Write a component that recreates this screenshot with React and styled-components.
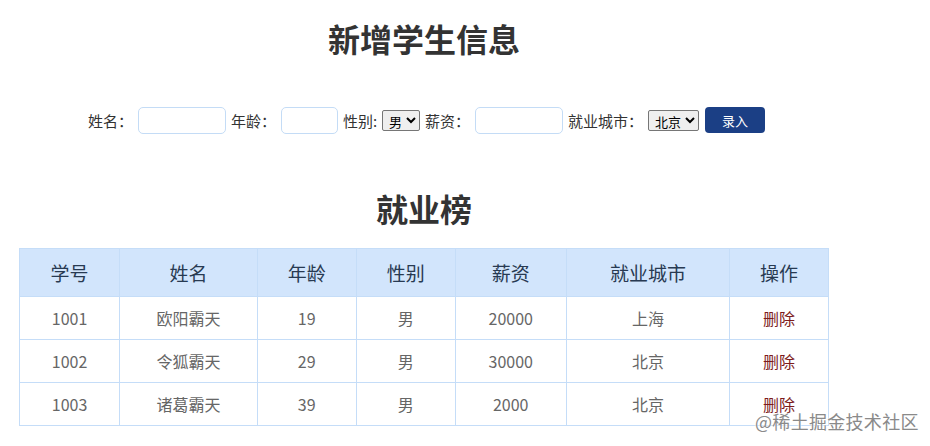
import React, { useState } from 'react'
import styled, { createGlobalStyle } from 'styled-components'

const GlobalStyle = createGlobalStyle`
  body {
    margin: 0;
    font-family: "Microsoft YaHei", "Noto Sans CJK SC", "Noto Sans", sans-serif;
    color: #333;
    background: #fff;
  }
`

const initial = [
  { id: '1001', name: '欧阳霸天', age: 19, sex: '男', salary: 20000, city: '上海' },
  { id: '1002', name: '令狐霸天', age: 29, sex: '男', salary: 30000, city: '北京' },
  { id: '1003', name: '诸葛霸天', age: 39, sex: '男', salary: 2000, city: '北京' },
]

function App() {
  const [list, setList] = useState(initial)

  const remove = (id) => {
    setList(list.filter((item) => item.id !== id))
  }

  return (
    <Page>
      <GlobalStyle />
      <Content>
        <Title>新增学生信息</Title>

        <Form>
          <Label>姓名：</Label>
          <Input width="88px" />
          <Label>年龄：</Label>
          <Input width="57px" />
          <Label>性别:</Label>
          <Select>
            <option>男</option>
            <option>女</option>
          </Select>
          <Label>薪资：</Label>
          <Input width="88px" />
          <Label>就业城市：</Label>
          <Select>
            <option>北京</option>
            <option>上海</option>
            <option>广州</option>
          </Select>
          <SubmitButton>录入</SubmitButton>
        </Form>

        <ListTitle>就业榜</ListTitle>

        <Table>
          <thead>
            <tr>
              <Th w="100px">学号</Th>
              <Th w="138px">姓名</Th>
              <Th w="99px">年龄</Th>
              <Th w="99px">性别</Th>
              <Th w="111px">薪资</Th>
              <Th w="164px">就业城市</Th>
              <Th w="99px">操作</Th>
            </tr>
          </thead>
          <tbody>
            {list.map((item) => (
              <tr key={item.id}>
                <Td>{item.id}</Td>
                <Td>{item.name}</Td>
                <Td>{item.age}</Td>
                <Td>{item.sex}</Td>
                <Td>{item.salary}</Td>
                <Td>{item.city}</Td>
                <Td>
                  <DeleteLink onClick={() => remove(item.id)}>删除</DeleteLink>
                </Td>
              </tr>
            ))}
          </tbody>
        </Table>
      </Content>

      <Watermark>@稀土掘金技术社区</Watermark>
    </Page>
  )
}

export default App

const Page = styled.div`
  position: relative;
  width: 930px;
  height: 446px;
  overflow: hidden;
`

const Content = styled.div`
  width: 832px;
  margin-left: 8px;
`

const Title = styled.h1`
  margin: 0;
  padding-top: 18px;
  font-size: 32px;
  line-height: 40px;
  font-weight: 700;
  text-align: center;
  color: #333;
`

const Form = styled.div`
  margin-top: 48px;
  height: 28px;
  display: flex;
  justify-content: center;
  align-items: center;
`

const Label = styled.span`
  font-size: 15px;
  color: #333;
  margin: 0 5px;
`

const Input = styled.input`
  width: ${(p) => p.width};
  height: 27px;
  box-sizing: border-box;
  border: 1px solid #c4dcf6;
  border-radius: 5px;
  outline: none;
`

const Select = styled.select`
  height: 21px;
  font-size: 13px;
  line-height: 19px;
  font-family: "Microsoft YaHei", "Noto Sans CJK SC", sans-serif;
  border: 1px solid #767676;
  border-radius: 2px;
  padding: 0 0 0 2px;
  margin: 0;
`

const SubmitButton = styled.button`
  margin-left: 6px;
  width: 60px;
  height: 26px;
  border: none;
  border-radius: 4px;
  background: #1b3f85;
  color: #fff;
  font-size: 13px;
  font-family: "Microsoft YaHei", "Noto Sans CJK SC", sans-serif;
  cursor: pointer;
`

const ListTitle = styled.h2`
  margin: 54px 0 0;
  font-size: 32px;
  line-height: 40px;
  font-weight: 700;
  text-align: center;
  color: #333;
`

const Table = styled.table`
  margin: 20px auto 0;
  width: 810px;
  border-collapse: collapse;
  text-align: center;
`

const Th = styled.th`
  width: ${(p) => p.w};
  height: 47px;
  padding: 0;
  background: #d2e5fc;
  border: 1px solid #c5ddf8;
  font-size: 19px;
  font-weight: 400;
  color: #283a52;
`

const Td = styled.td`
  height: 42px;
  padding: 0;
  border: 1px solid #c5ddf8;
  font-size: 16px;
  color: #666;
`

const DeleteLink = styled.a`
  color: #7d1c1c;
  cursor: pointer;
  font-size: 16px;
`

const Watermark = styled.div`
  position: absolute;
  left: 755px;
  bottom: 12px;
  font-size: 18px;
  color: #8a8a8a;
  text-shadow: 0 0 2px #fff, 0 0 2px #fff;
  letter-spacing: 0.3px;
  white-space: nowrap;
`
